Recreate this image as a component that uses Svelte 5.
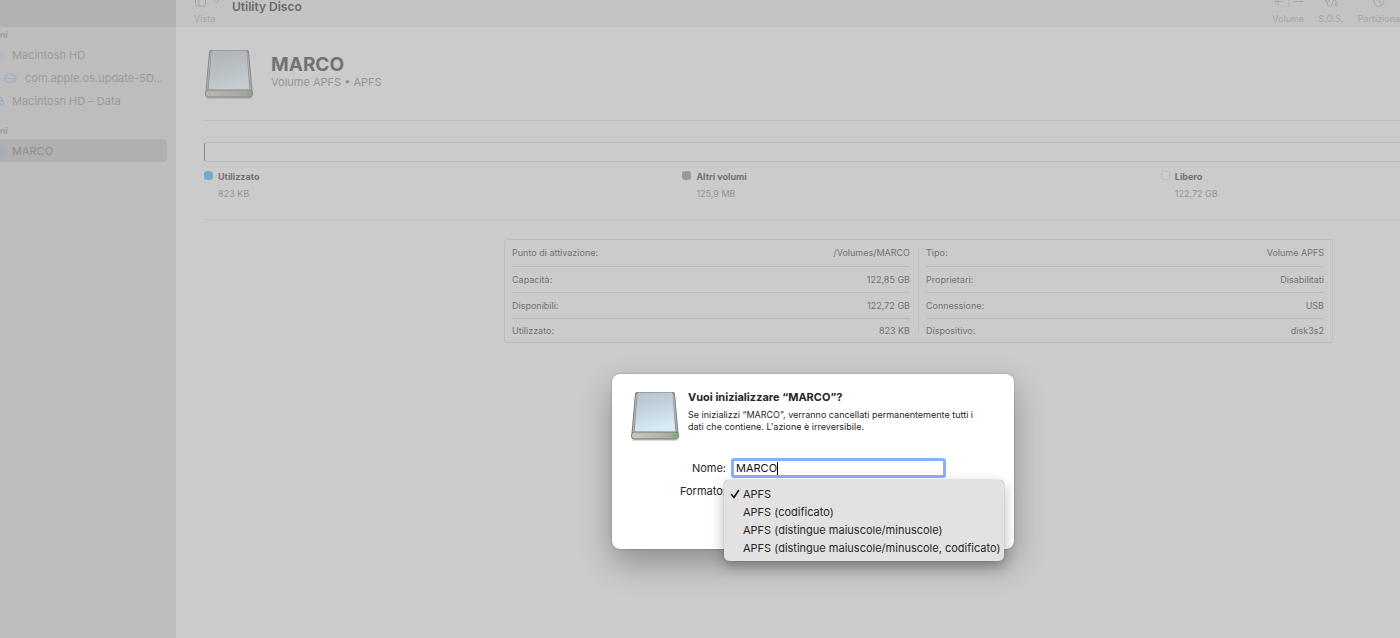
<script>
  const internal = [
    { name: 'Macintosh HD', icon: 'lock', faded: true },
    { name: 'com.apple.os.update-5D…', icon: 'drive', nested: true },
    { name: 'Macintosh HD – Data', icon: 'lock' }
  ];
  const external = [{ name: 'MARCO', icon: 'lock', selected: true }];

  const usage = [
    { label: 'Utilizzato', value: '823 KB', kind: 'used' },
    { label: 'Altri volumi', value: '125,9 MB', kind: 'other' },
    { label: 'Libero', value: '122,72 GB', kind: 'free' }
  ];

  const details = [
    [
      ['Punto di attivazione:', '/Volumes/MARCO'],
      ['Capacità:', '122,85 GB'],
      ['Disponibili:', '122,72 GB'],
      ['Utilizzato:', '823 KB']
    ],
    [
      ['Tipo:', 'Volume APFS'],
      ['Proprietari:', 'Disabilitati'],
      ['Connessione:', 'USB'],
      ['Dispositivo:', 'disk3s2']
    ]
  ];

  const formats = [
    'APFS',
    'APFS (codificato)',
    'APFS (distingue maiuscole/minuscole)',
    'APFS (distingue maiuscole/minuscole, codificato)'
  ];

  let name = $state('MARCO');
  let format = $state('APFS');
</script>

{#snippet disk(id)}
  <svg class="disk" viewBox="0 0 50 52" aria-hidden="true">
    <defs>
      <linearGradient id="{id}-top" x1="0" y1="0" x2="0.3" y2="1">
        <stop offset="0" stop-color="#b6c1ca" />
        <stop offset="0.5" stop-color="#c4d3dd" />
        <stop offset="1" stop-color="#d6ebf6" />
      </linearGradient>
      <linearGradient id="{id}-front" x1="0" y1="0" x2="1" y2="0">
        <stop offset="0" stop-color="#c9c8c2" />
        <stop offset="1" stop-color="#a5a49c" />
      </linearGradient>
    </defs>
    <rect x="2" y="47" width="46" height="4" rx="2" fill="#000" opacity="0.15" />
    <path d="M5 4Q5.200 2 7 2H43Q44.800 2 45 4L48.500 43H1.500Z" fill="#77797d" />
    <path d="M5.800 5L2.500 42H3.800L7.200 3Z" fill="#b4b6b9" />
    <path d="M44.200 5L47.500 42H46.200L42.800 3Z" fill="#b4b6b9" />
    <path d="M7.500 2.500H42.500L45.500 42H4.500Z" fill="url(#{id}-top)" />
    <rect x="1.500" y="42" width="47" height="7" rx="3" fill="url(#{id}-front)" stroke="#77776f" />
    <ellipse cx="44.500" cy="45.500" rx="2" ry="1.500" fill="#2fdc35" />
  </svg>
{/snippet}

{#snippet volumeRow(item)}
  <li>
    <button class="row" class:nested={item.nested} class:selected={item.selected}>
      {#if item.icon === 'drive'}
        <svg class="drive" viewBox="0 0 13 10" aria-hidden="true">
          <path d="M1 5L3 1.500Q3.300 1 4 1H9Q9.700 1 10 1.500L12 5V7.500Q12 9 10.500 9H2.500Q1 9 1 7.500ZM1 5.300H12M8 7.200H10" />
        </svg>
      {:else}
        <svg class="lock" class:faded={item.faded} viewBox="0 0 4 10" aria-hidden="true">
          <path d="M0 1Q2 1 2 3V4.500M0 4.500H2Q3.500 4.500 3.500 6V7.500Q3.500 9 2 9H0M0 7H1.500" />
        </svg>
      {/if}
      <span>{item.name}</span>
    </button>
  </li>
{/snippet}

<div class="window">
  <aside class="sidebar">
    <div class="sidebar-top"></div>
    <h2>ni</h2>
    <ul>
      {#each internal as item}
        {@render volumeRow(item)}
      {/each}
    </ul>
    <h2 class="second">ni</h2>
    <ul>
      {#each external as item}
        {@render volumeRow(item)}
      {/each}
    </ul>
  </aside>

  <main>
    <header class="toolbar">
      <button class="tool view">
        <svg width="26" height="12" viewBox="0 0 26 12" aria-hidden="true">
          <path d="M1.500 0V8.500Q1.500 10 3 10H10Q11.500 10 11.500 8.500V0M5 0V10M3 3H4M3 5.500H4M20 4L22.500 7L25 4" />
        </svg>
        <span>Vista</span>
      </button>
      <h1>Utility Disco</h1>
      <div class="tools">
        <button class="tool">
          <svg width="32" height="12" viewBox="0 0 32 12" aria-hidden="true">
            <path d="M2 5.500H10M6 1V9.500M22 5.500H31" />
            <path class="divider" d="M16.500 0V11" />
          </svg>
          <span>Volume</span>
        </button>
        <button class="tool">
          <svg width="16" height="12" viewBox="0 0 16 12" aria-hidden="true">
            <path d="M2 3Q2 6 4.500 6T7 3M4.500 6V8Q4.500 10.500 7 10.500T9 8L10 5Q11 3 12.500 5L13.500 7" />
            <circle cx="13.500" cy="8.500" r="1.500" />
          </svg>
          <span>S.O.S.</span>
        </button>
        <button class="tool">
          <svg width="14" height="12" viewBox="0 0 14 12" aria-hidden="true">
            <circle cx="7" cy="5.500" r="5" />
            <path d="M7 0V5.500L10.500 9" />
          </svg>
          <span>Partiziona</span>
        </button>
      </div>
    </header>

    <div class="content">
      <section class="volume">
        {@render disk('volume')}
        <div>
          <h2>MARCO</h2>
          <p>Volume APFS • APFS</p>
        </div>
      </section>

      <section class="usage">
        <div class="bar"></div>
        <ul>
          {#each usage as part}
            <li>
              <i class="swatch {part.kind}"></i>
              <div>
                <strong>{part.label}</strong>
                <span>{part.value}</span>
              </div>
            </li>
          {/each}
        </ul>
      </section>

      <section class="details">
        {#each details as rows}
          <div class="column">
            <table>
              <tbody>
                {#each rows as [label, value]}
                  <tr>
                    <th scope="row">{label}</th>
                    <td>{value}</td>
                  </tr>
                {/each}
              </tbody>
            </table>
          </div>
        {/each}
      </section>
    </div>
  </main>

  <div class="overlay">
    <form class="dialog" role="dialog" aria-labelledby="dialog-title" onsubmit={(e) => e.preventDefault()}>
      <div class="intro">
        {@render disk('dialog')}
        <div>
          <h2 id="dialog-title">Vuoi inizializzare “MARCO”?</h2>
          <p>Se inizializzi “MARCO”, verranno cancellati permanentemente tutti i dati che contiene. L'azione è irreversibile.</p>
        </div>
      </div>
      <div class="fields">
        <label for="name">Nome:</label>
        <div class="name-box">
          <input id="name" type="text" size={name.length} bind:value={name} />
          <i class="caret"></i>
        </div>
        <label for="format">Formato:</label>
        <div class="format-box">
          <select id="format" bind:value={format}>
            {#each formats as option}
              <option>{option}</option>
            {/each}
          </select>
          <ul class="menu">
            {#each formats as option}
              <li>
                <button type="button" onclick={() => (format = option)}>
                  <svg viewBox="0 0 10 10" aria-hidden="true">
                    {#if option === format}
                      <path d="M1.500 5.500L4 8.500L8.500 1.500" />
                    {/if}
                  </svg>
                  {option}
                </button>
              </li>
            {/each}
          </ul>
        </div>
      </div>
    </form>
  </div>
</div>

<style>
  :global(body) {
    margin: 0;
    background: #cbcbcb;
  }
  .window {
    position: relative;
    display: flex;
    min-height: 100vh;
    overflow: hidden;
    font-family: Inter, "Liberation Sans", sans-serif;
    font-size: 11px;
    color: #727272;
  }
  h1, h2, p, ul {
    margin: 0;
    padding: 0;
  }
  ul {
    list-style: none;
  }
  button {
    padding: 0;
    border: 0;
    background: none;
    font: inherit;
    color: inherit;
    text-align: left;
  }
  svg {
    flex: none;
    fill: none;
    stroke: currentColor;
  }

  /* Sidebar */
  .sidebar {
    flex: none;
    width: 176px;
    background: #bdbdbd;
    color: #9b9b9b;
  }
  .sidebar-top {
    height: 27px;
    background: #b1b1b1;
  }
  .sidebar h2 {
    height: 16px;
    font-size: 9px;
    line-height: 16px;
    font-weight: 600;
  }
  .sidebar .second {
    margin-top: 11px;
  }
  .row {
    display: flex;
    align-items: center;
    gap: 8px;
    width: 167px;
    height: 23px;
    border-radius: 0 4px 4px 0;
    white-space: nowrap;
  }
  .row.nested {
    padding-left: 4px;
  }
  .row.selected {
    background: #b0b0b0;
    color: #8f8f8f;
  }
  .lock {
    width: 4px;
    height: 10px;
    color: #8fa9c8;
  }
  .lock.faded {
    opacity: 0.4;
  }
  .drive {
    width: 13px;
    height: 10px;
    color: #98adc6;
  }

  /* Toolbar */
  main {
    flex: 1;
    min-width: 0;
  }
  .toolbar {
    display: flex;
    height: 27px;
    background: #c3c3c3;
    overflow: hidden;
  }
  .tool {
    display: flex;
    flex-direction: column;
    align-items: center;
    justify-content: space-between;
    height: 30px;
    margin-top: -4px;
    font-size: 9px;
    line-height: 14px;
    color: #a5a5a5;
  }
  .view {
    align-items: flex-start;
    margin-left: 18px;
  }
  .divider {
    stroke: #b8b8b8;
  }
  h1 {
    margin-left: 12px;
    font-size: 12px;
    line-height: 13px;
    font-weight: 600;
    color: #6a6a6a;
  }
  .tools {
    display: flex;
    gap: 14px;
    margin-left: auto;
  }

  /* Volume summary */
  .content {
    padding-left: 28px;
  }
  .volume {
    display: flex;
    align-items: center;
    gap: 17px;
    height: 93px;
    border-bottom: 1px solid #bfbfbf;
  }
  .disk {
    width: 50px;
    height: 52px;
    stroke: none;
  }
  .volume .disk {
    filter: brightness(0.88) saturate(0.7);
    opacity: 0.7;
  }
  .volume h2 {
    font-size: 19px;
    line-height: 20px;
    font-weight: 700;
  }
  .volume p {
    padding-bottom: 4px;
    line-height: 14px;
    color: #959595;
  }
  .usage {
    padding: 21px 0 17px;
    border-bottom: 1px solid #c0c0c0;
  }
  .bar {
    height: 18px;
    border: 1px solid #bebebe;
    border-left-color: #888;
    border-right: 0;
    border-radius: 3px 0 0 3px;
  }
  .usage ul {
    display: grid;
    grid-template-columns: 2fr 2fr 1fr;
    margin-top: 6px;
  }
  .usage li {
    display: flex;
    gap: 5px;
    font-size: 9px;
    line-height: 17px;
  }
  .usage strong, .usage span {
    display: block;
  }
  .usage strong {
    font-weight: 700;
  }
  .usage span {
    color: #949494;
  }
  .swatch {
    box-sizing: border-box;
    width: 9px;
    height: 9px;
    margin-top: 3px;
    border-radius: 3px;
  }
  .used {
    background: #76a9cb;
  }
  .other {
    background: #999;
  }
  .free {
    border: 1px solid #bcbcbc;
  }

  /* Volume details */
  .details {
    display: flex;
    margin: 19px 67px 0 300px;
    border: 1px solid #bcbcbc;
    border-radius: 3px;
  }
  .column {
    flex: 1;
    padding: 0 8px 0 7px;
    background: linear-gradient(#c0c0c0, #c0c0c0) left / 0 86px no-repeat;
  }
  .column + .column {
    padding: 0 8px;
    background-size: 1px 86px;
  }
  table {
    width: 100%;
    border-collapse: collapse;
    font-size: 9px;
    line-height: 11px;
  }
  tr {
    height: 26px;
    border-bottom: 1px solid #bababa;
  }
  tr:last-child {
    height: 24px;
    border-bottom: 0;
  }
  th, td {
    padding: 0;
    font-weight: 400;
    text-align: left;
  }
  td {
    text-align: right;
  }

  /* Erase sheet */
  .overlay {
    position: absolute;
    inset: 0;
    display: flex;
    align-items: flex-start;
    justify-content: center;
    padding: 374px 0 0 226px;
  }
  .dialog {
    box-sizing: border-box;
    width: 402px;
    padding: 16px 18px 48px;
    border-radius: 8px;
    background: #fff;
    box-shadow: 0 14px 32px rgba(0, 0, 0, 0.3), 0 0 2px rgba(0, 0, 0, 0.3);
    color: #262626;
  }
  .intro {
    display: flex;
    gap: 8px;
  }
  .intro h2 {
    font-size: 11px;
    line-height: 14px;
    font-weight: 700;
  }
  .intro p {
    margin-top: 5px;
    padding-right: 12px;
    font-size: 9px;
    line-height: 12px;
  }
  .fields {
    display: grid;
    grid-template-columns: 96px 215px;
    column-gap: 5px;
    row-gap: 3px;
    margin-top: 16px;
    line-height: 20px;
  }
  label {
    text-align: right;
  }
  .name-box {
    display: flex;
    align-items: center;
    box-sizing: border-box;
    height: 20px;
    padding-left: 2px;
    border: 3px solid #8ab0f8;
    border-radius: 3px;
  }
  input {
    field-sizing: content;
    min-width: 0;
    padding: 0;
    border: 0;
    outline: 0;
    background: none;
    font: inherit;
    color: #111;
  }
  .caret {
    width: 1px;
    height: 13px;
    background: #000;
  }
  .format-box {
    position: relative;
    height: 20px;
  }
  select {
    width: 100%;
    height: 18px;
    border: 1px solid #ccc;
    border-radius: 4px;
    background: #fff;
    font: inherit;
  }
  .menu {
    position: absolute;
    top: -1px;
    left: -7px;
    padding: 5px 4px 4px 6px;
    border-radius: 5px;
    background: #e2e2e2;
    box-shadow: 0 5px 14px rgba(0, 0, 0, 0.3), 0 0 1px rgba(0, 0, 0, 0.5);
    white-space: nowrap;
  }
  .menu button {
    display: flex;
    align-items: center;
    gap: 3px;
    height: 18px;
  }
  .menu svg {
    width: 10px;
    height: 10px;
    stroke: #111;
    stroke-width: 1.6;
    stroke-linecap: round;
  }
</style>
